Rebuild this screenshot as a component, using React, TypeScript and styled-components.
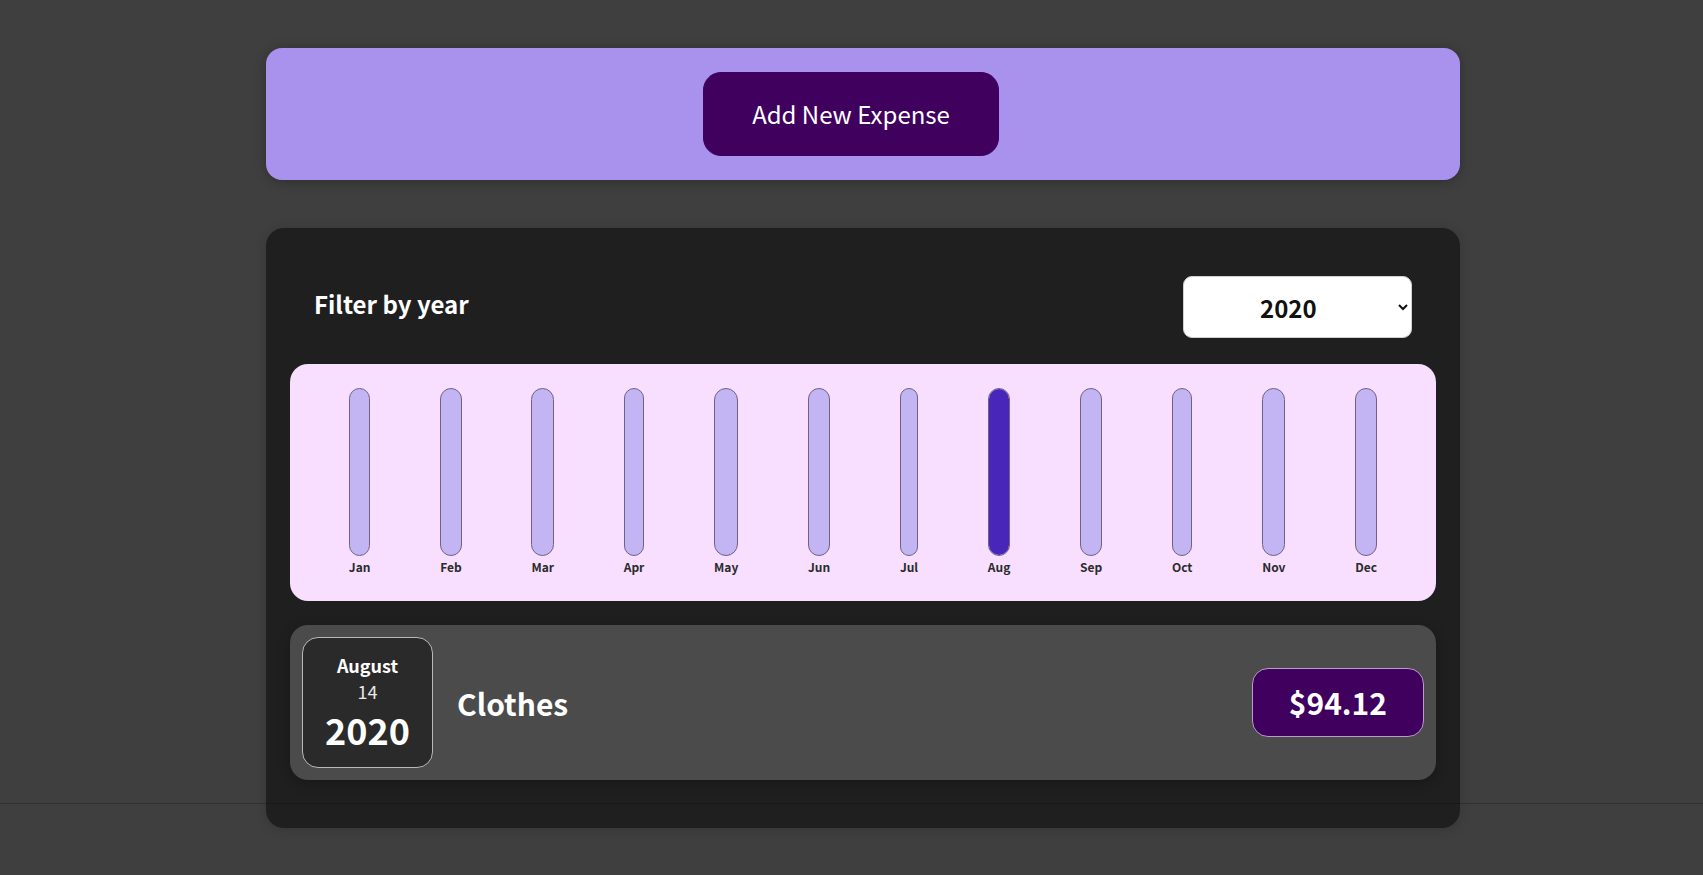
import React from "react";
import styled, { createGlobalStyle } from "styled-components";

const GlobalStyle = createGlobalStyle`
  * { box-sizing: border-box; }
  html, body { margin: 0; padding: 0; }
  body {
    background: #3f3f3f;
    font-family: "Noto Sans CJK JP", "Noto Sans", sans-serif;
  }
`;

const Page = styled.div`
  position: relative;
  display: flex;
  flex-direction: column;
  padding: 48px 243px 45px 266px;
  min-height: 875px;
`;

const NewExpenseCard = styled.div`
  background: #a892ee;
  padding: 24px;
  border-radius: 16px;
  box-shadow: 0 1.5px 12px rgba(0, 0, 0, 0.25);
  display: flex;
  justify-content: center;
`;

const AddButton = styled.button`
  font: inherit;
  font-size: 24px;
  line-height: 34px;
  color: #fff;
  background: #40005d;
  border: 1px solid #40005d;
  border-radius: 18px;
  padding: 24px 48px;
  margin-right: 24px;
  cursor: pointer;
`;

const ExpensesCard = styled.div`
  margin-top: 48px;
  background: #1f1f1f;
  border-radius: 18px;
  padding: 24px;
  box-shadow: 0 1.5px 12px rgba(0, 0, 0, 0.15);
`;

const Filter = styled.div`
  color: #fff;
  padding: 0 24px;
`;

const FilterControl = styled.div`
  display: flex;
  align-items: center;
  justify-content: space-between;
  margin: 24px 0 26px;
`;

const FilterLabel = styled.label`
  font-size: 24px;
  font-weight: bold;
  line-height: 34px;
  margin-bottom: 7px;
`;

const YearSelect = styled.select`
  font: inherit;
  font-size: 24px;
  font-weight: bold;
  line-height: 34px;
  padding: 12px 72px;
  width: 229px;
  height: 62px;
  border-radius: 9px;
  border: 1px solid #cfcfcf;
  background: #fff;
  color: #111;
`;

const Chart = styled.div`
  height: 237px;
  padding: 24px;
  border-radius: 18px;
  background: #f8dfff;
  display: flex;
  justify-content: space-around;
  text-align: center;
`;

const ChartBarColumn = styled.div`
  height: 100%;
  display: flex;
  flex-direction: column;
  align-items: center;
`;

const ChartBarInner = styled.div`
  flex: 1;
  width: 100%;
  border: 1px solid #6f6286;
  border-radius: 18px;
  background: #c3b4f3;
  display: flex;
  flex-direction: column;
  justify-content: flex-end;
  overflow: hidden;
`;

const ChartBarFill = styled.div`
  width: 100%;
  background: #4826b9;
`;

const ChartBarLabel = styled.div`
  font-size: 12px;
  font-weight: bold;
  line-height: 20px;
  padding-top: 1px;
  color: #2b2b2b;
`;

const ExpenseList = styled.ul`
  list-style: none;
  margin: 0;
  padding: 0;
`;

const ExpenseItem = styled.li`
  display: flex;
  align-items: center;
  justify-content: space-between;
  margin: 24px 0;
  padding: 12px;
  border-radius: 18px;
  background: #4b4b4b;
  box-shadow: 0 3px 12px rgba(0, 0, 0, 0.25);
`;

const DateBox = styled.div`
  width: 131px;
  height: 131px;
  display: flex;
  flex-direction: column;
  align-items: center;
  justify-content: center;
  border: 1px solid #b9b9b9;
  border-radius: 16px;
  background: #2a2a2a;
  color: #fff;
`;

const DateMonth = styled.div`
  font-size: 18px;
  font-weight: bold;
  line-height: 26px;
`;

const DateDay = styled.div`
  font-size: 18px;
  line-height: 26px;
  color: #e8e8e8;
`;

const DateYear = styled.div`
  font-size: 36px;
  font-weight: bold;
  line-height: 50px;
`;

const Description = styled.div`
  flex: 1;
  display: flex;
  align-items: center;
  justify-content: flex-start;
`;

const Title = styled.h2`
  flex: 1;
  margin: 0 24px;
  font-size: 30px;
  font-weight: bold;
  color: #fff;
`;

const Price = styled.div`
  font-size: 30px;
  font-weight: bold;
  line-height: 43px;
  color: #fff;
  background: #40005d;
  border: 1px solid #b99ccb;
  border-radius: 16px;
  padding: 12px 36px;
`;

const Divider = styled.div`
  position: absolute;
  left: 0;
  right: 0;
  top: 803px;
  height: 1px;
  background: rgba(0, 0, 0, 0.22);
  pointer-events: none;
`;

const months = ["Jan", "Feb", "Mar", "Apr", "May", "Jun", "Jul", "Aug", "Sep", "Oct", "Nov", "Dec"];
const values = [0, 0, 0, 0, 0, 0, 0, 94.12, 0, 0, 0, 0];
const max = Math.max(...values);

export default function App() {
  return (
    <>
      <GlobalStyle />
      <Page>
        <NewExpenseCard>
          <AddButton>Add New Expense</AddButton>
        </NewExpenseCard>
        <ExpensesCard>
          <Filter>
            <FilterControl>
              <FilterLabel>Filter by year</FilterLabel>
              <YearSelect defaultValue="2020">
                <option value="2022">2022</option>
                <option value="2021">2021</option>
                <option value="2020">2020</option>
                <option value="2019">2019</option>
              </YearSelect>
            </FilterControl>
          </Filter>
          <Chart>
            {months.map((m, i) => (
              <ChartBarColumn key={m}>
                <ChartBarInner>
                  <ChartBarFill style={{ height: `${max > 0 ? Math.round((values[i] / max) * 100) : 0}%` }} />
                </ChartBarInner>
                <ChartBarLabel>{m}</ChartBarLabel>
              </ChartBarColumn>
            ))}
          </Chart>
          <ExpenseList>
            <ExpenseItem>
              <DateBox>
                <DateMonth>August</DateMonth>
                <DateDay>14</DateDay>
                <DateYear>2020</DateYear>
              </DateBox>
              <Description>
                <Title>Clothes</Title>
                <Price>$94.12</Price>
              </Description>
            </ExpenseItem>
          </ExpenseList>
        </ExpensesCard>
        <Divider />
      </Page>
    </>
  );
}
